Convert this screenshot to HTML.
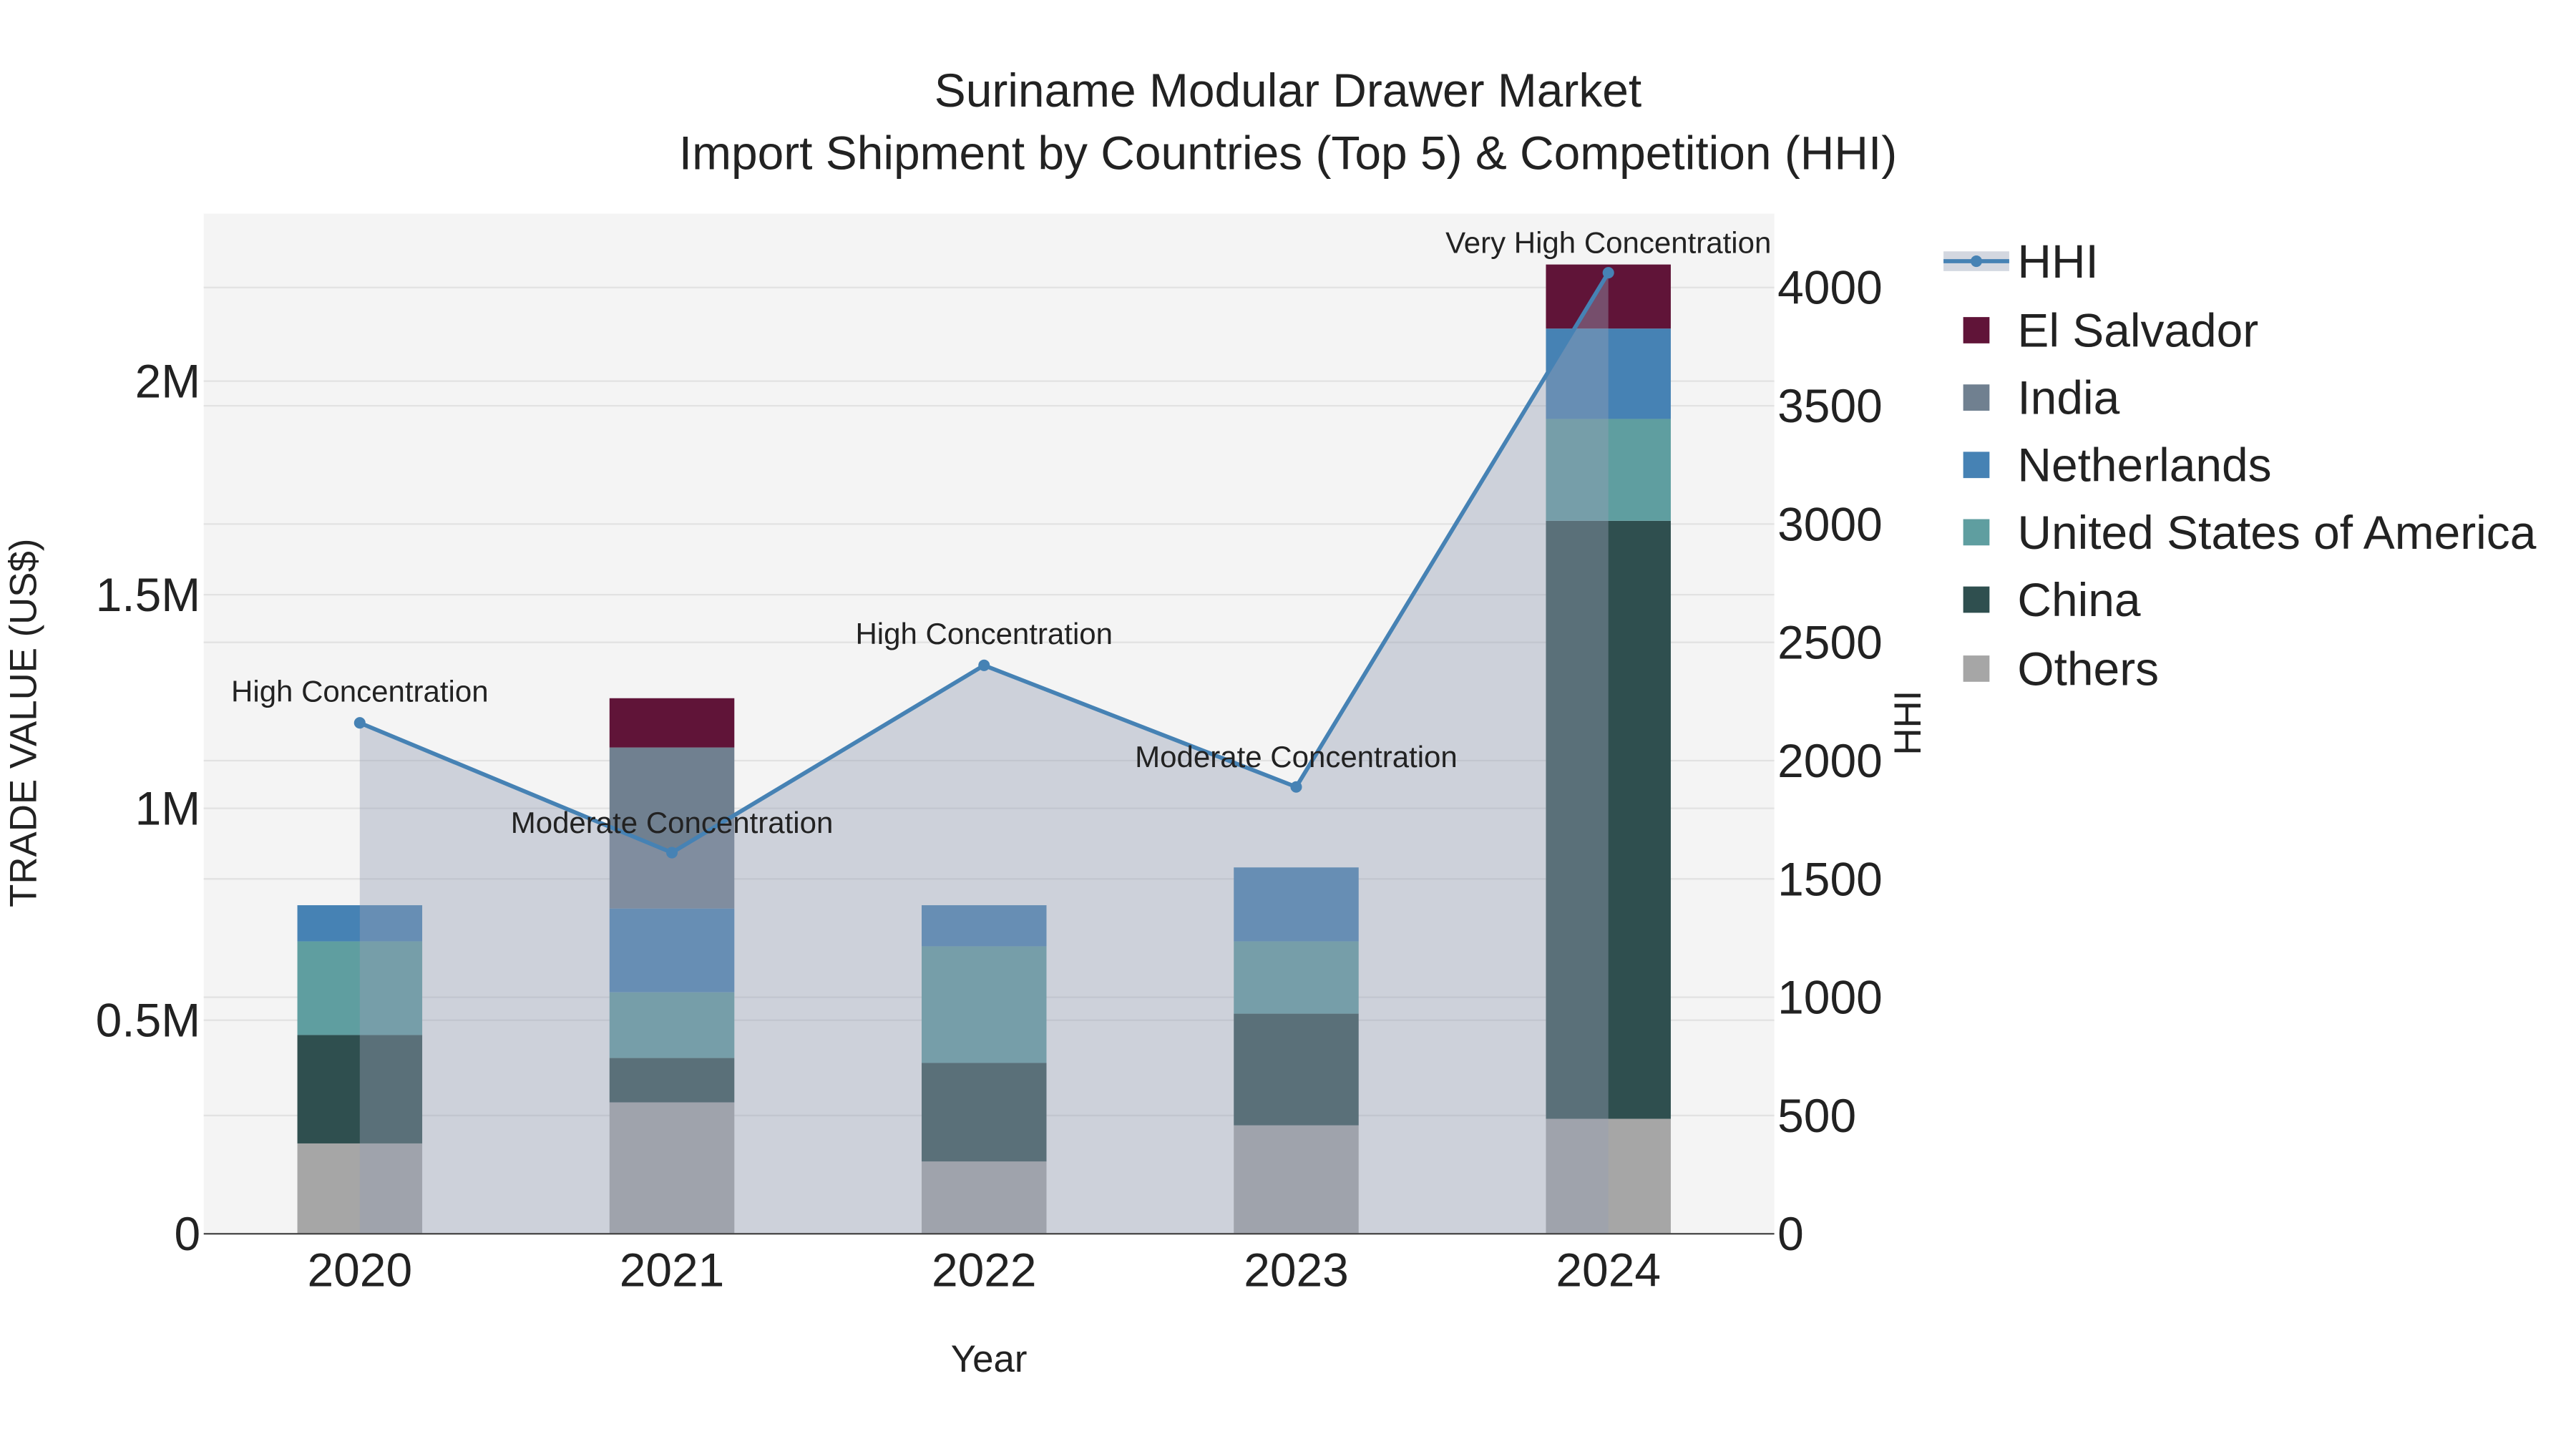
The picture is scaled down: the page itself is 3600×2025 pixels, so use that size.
<!DOCTYPE html>
<html><head><meta charset="utf-8"><style>
html,body{margin:0;padding:0;background:#fff;}
svg{display:block;}
text{font-family:"Liberation Sans",sans-serif;fill:#222;}
</style></head><body>
<svg width="3600" height="2025" viewBox="0 0 1568 882" xmlns="http://www.w3.org/2000/svg">
<rect x="0" y="0" width="1568" height="882" fill="#fff"/>
<rect x="124" y="130" width="956" height="621" fill="#f4f4f4"/>
<g stroke="#e2e2e2" stroke-width="1">
<line x1="124" x2="1080" y1="621" y2="621"/><line x1="124" x2="1080" y1="492" y2="492"/>
<line x1="124" x2="1080" y1="362" y2="362"/><line x1="124" x2="1080" y1="232" y2="232"/>
<line x1="124" x2="1080" y1="679" y2="679"/><line x1="124" x2="1080" y1="607" y2="607"/>
<line x1="124" x2="1080" y1="535" y2="535"/><line x1="124" x2="1080" y1="463" y2="463"/>
<line x1="124" x2="1080" y1="391" y2="391"/><line x1="124" x2="1080" y1="319" y2="319"/>
<line x1="124" x2="1080" y1="247" y2="247"/><line x1="124" x2="1080" y1="175" y2="175"/>
</g>
<g>
<rect x="181" y="696" width="76" height="55" fill="#a6a6a6"/>
<rect x="181" y="630" width="76" height="66" fill="#2f4f4f"/>
<rect x="181" y="573" width="76" height="57" fill="#5f9ea0"/>
<rect x="181" y="551" width="76" height="22" fill="#4682b4"/>

<rect x="371" y="671" width="76" height="80" fill="#a6a6a6"/>
<rect x="371" y="644" width="76" height="27" fill="#2f4f4f"/>
<rect x="371" y="604" width="76" height="40" fill="#5f9ea0"/>
<rect x="371" y="553" width="76" height="51" fill="#4682b4"/>
<rect x="371" y="455" width="76" height="98" fill="#708090"/>
<rect x="371" y="425" width="76" height="30" fill="#601438"/>

<rect x="561" y="707" width="76" height="44" fill="#a6a6a6"/>
<rect x="561" y="647" width="76" height="60" fill="#2f4f4f"/>
<rect x="561" y="576" width="76" height="71" fill="#5f9ea0"/>
<rect x="561" y="551" width="76" height="25" fill="#4682b4"/>

<rect x="751" y="685" width="76" height="66" fill="#a6a6a6"/>
<rect x="751" y="617" width="76" height="68" fill="#2f4f4f"/>
<rect x="751" y="573" width="76" height="44" fill="#5f9ea0"/>
<rect x="751" y="528" width="76" height="45" fill="#4682b4"/>

<rect x="941" y="681" width="76" height="70" fill="#a6a6a6"/>
<rect x="941" y="317" width="76" height="364" fill="#2f4f4f"/>
<rect x="941" y="255" width="76" height="62" fill="#5f9ea0"/>
<rect x="941" y="200" width="76" height="55" fill="#4682b4"/>
<rect x="941" y="161" width="76" height="39" fill="#601438"/>
</g>
<polygon points="219,751 219,440 409,519 599,405 789,479 979,166 979,751" fill="rgb(150,160,182)" fill-opacity="0.42"/>
<polyline points="219,440 409,519 599,405 789,479 979,166" fill="none" stroke="#4682b4" stroke-width="2.5"/>
<g fill="#4682b4"><circle cx="219" cy="440" r="3.5"/><circle cx="409" cy="519" r="3.5"/><circle cx="599" cy="405" r="3.5"/><circle cx="789" cy="479" r="3.5"/><circle cx="979" cy="166" r="3.5"/></g>
<line x1="124" x2="1080" y1="751" y2="751" stroke="#444" stroke-width="1"/>
<g font-size="18.3" text-anchor="middle">
<text x="219" y="427">High Concentration</text>
<text x="409" y="507">Moderate Concentration</text>
<text x="599" y="392">High Concentration</text>
<text x="789" y="467">Moderate Concentration</text>
<text x="979" y="154">Very High Concentration</text>
</g>
<g font-size="28.7" text-anchor="end">
<text x="122" y="761">0</text><text x="122" y="631">0.5M</text><text x="122" y="502">1M</text>
<text x="122" y="372">1.5M</text><text x="122" y="242">2M</text>
</g>
<g font-size="28.7" text-anchor="start">
<text x="1082" y="761">0</text><text x="1082" y="689">500</text><text x="1082" y="617">1000</text>
<text x="1082" y="545">1500</text><text x="1082" y="473">2000</text><text x="1082" y="401">2500</text>
<text x="1082" y="329">3000</text><text x="1082" y="257">3500</text><text x="1082" y="185">4000</text>
</g>
<g font-size="28.7" text-anchor="middle">
<text x="219" y="783">2020</text><text x="409" y="783">2021</text><text x="599" y="783">2022</text>
<text x="789" y="783">2023</text><text x="979" y="783">2024</text>
</g>
<text x="602" y="835" font-size="23" text-anchor="middle">Year</text>
<text transform="translate(22,440) rotate(-90)" font-size="23" text-anchor="middle">TRADE VALUE (US$)</text>
<text transform="translate(1169,440) rotate(-90)" font-size="23" text-anchor="middle">HHI</text>
<text x="784" y="65" font-size="28.7" text-anchor="middle">Suriname Modular Drawer Market</text>
<text x="784" y="103" font-size="28.7" text-anchor="middle">Import Shipment by Countries (Top 5) &amp; Competition (HHI)</text>
<rect x="1183" y="153" width="40" height="12" fill="rgb(150,160,182)" fill-opacity="0.42"/>
<line x1="1183" x2="1223" y1="159" y2="159" stroke="#4682b4" stroke-width="2.5"/>
<circle cx="1203" cy="159" r="3.5" fill="#4682b4"/>
<rect x="1195" y="193" width="16" height="16" fill="#601438"/>
<rect x="1195" y="234" width="16" height="16" fill="#708090"/>
<rect x="1195" y="275" width="16" height="16" fill="#4682b4"/>
<rect x="1195" y="316" width="16" height="16" fill="#5f9ea0"/>
<rect x="1195" y="357" width="16" height="16" fill="#2f4f4f"/>
<rect x="1195" y="399" width="16" height="16" fill="#a6a6a6"/>
<g font-size="28.7">
<text x="1228" y="169">HHI</text><text x="1228" y="211">El Salvador</text><text x="1228" y="252">India</text>
<text x="1228" y="293">Netherlands</text><text x="1228" y="334">United States of America</text>
<text x="1228" y="375">China</text><text x="1228" y="417">Others</text>
</g>
</svg>
</body></html>
